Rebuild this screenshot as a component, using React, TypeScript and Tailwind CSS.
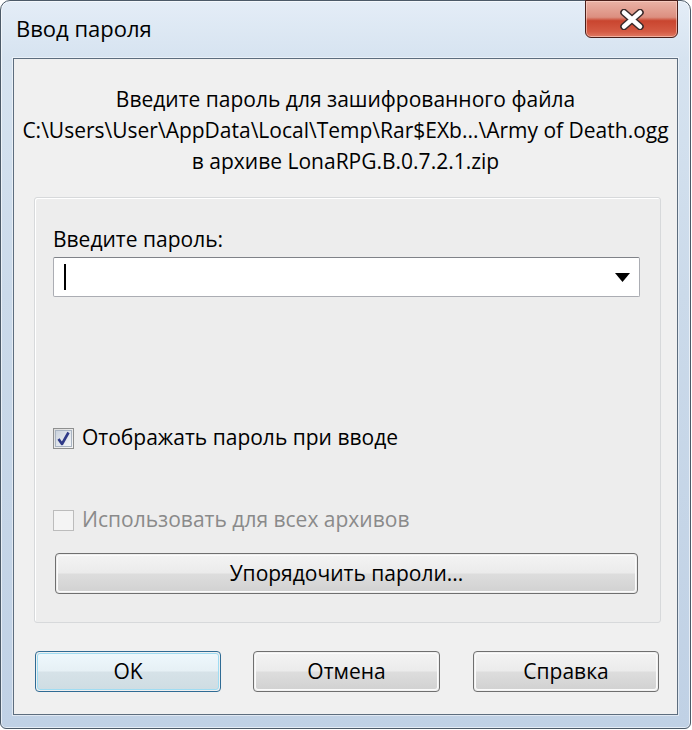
import React from "react";

const CloseGlyph: React.FC = () => (
  <svg width="26" height="21" viewBox="0 0 26 21">
    <path d="M5 3.5 L21 17.5 M21 3.5 L5 17.5" stroke="#3a2a2a" strokeWidth="7.5" strokeLinecap="round" />
    <path d="M5 3.5 L21 17.5 M21 3.5 L5 17.5" stroke="#ffffff" strokeWidth="4.5" strokeLinecap="round" />
  </svg>
);

const CheckMark: React.FC = () => (
  <svg width="15" height="15" viewBox="0 0 15 15">
    <path d="M2.5 8 L6 13 L12.5 1.5" fill="none" stroke="#2f3a88" strokeWidth="2.6" strokeLinejoin="round" />
  </svg>
);

const Win7Button: React.FC<{ label: string; primary?: boolean; className?: string }> = ({ label, primary, className }) => (
  <button
    className={
      "h-[41px] rounded-[4px] border p-[1px] " +
      (primary ? "border-[#2f6b94] " : "border-[#6f6f6f] ") +
      (className ?? "")
    }
  >
    <div
      className={
        "flex h-full w-full items-center justify-center rounded-[3px] border text-[21px] text-black " +
        (primary
          ? "border-[#9fdcf2] bg-[linear-gradient(#eef8fc_0%,#e6f0f5_48%,#d6e2e8_52%,#cfdde3_100%)]"
          : "border-[#fbfbfb] bg-[linear-gradient(#f3f3f3_0%,#ebebeb_48%,#dddddd_52%,#d2d2d2_100%)]")
      }
    >
      {label}
    </div>
  </button>
);

export default function App() {
  return (
    <div className="h-[730px] w-[692px] bg-white font-['Open_Sans',sans-serif] text-black">
      <div className="relative flex h-[729px] w-[691px] flex-col rounded-t-[10px] rounded-b-[6px] border border-[#4c5a68] bg-[linear-gradient(#e4edf7_0%,#d6e3f0_8%,#cbdaea_40%,#c0d1e5_100%)] shadow-[inset_0_0_0_1px_rgba(255,255,255,0.6)]">
        {/* title bar */}
        <div className="flex h-[57px] items-center pl-[15px] pb-[2px] text-[22px] text-black">Ввод пароля</div>
        <div className="absolute top-[-1px] right-[12px] flex h-[38px] w-[93px] items-center justify-center rounded-b-[6px] border border-[#4a1f1a] bg-[linear-gradient(#eab3a6_0%,#dc8f80_45%,#c9452f_55%,#d45a43_85%,#e07a63_100%)] shadow-[inset_0_0_0_1px_rgba(255,220,210,0.55)]">
          <CloseGlyph />
        </div>

        {/* client area */}
        <div className="mx-[12px] mb-[13px] flex flex-1 flex-col border border-[#5d6d7e] bg-[#f0f0f0] shadow-[0_0_0_1px_rgba(255,255,255,0.5)]">
          <div className="flex flex-col items-center pt-[25px] text-[21px] leading-[31px]">
            <div>Введите пароль для зашифрованного файла</div>
            <div className="whitespace-nowrap">C:\Users\User\AppData\Local\Temp\Rar$EXb...\Army of Death.ogg</div>
            <div>в архиве LonaRPG.B.0.7.2.1.zip</div>
          </div>

          {/* group box */}
          <div className="mt-[20px] ml-[20px] mr-[16px] flex flex-col rounded-[3px] border border-[#d7d9db] bg-[#ededed] pl-[18px] pr-[20px] pt-[26px] pb-[28px] shadow-[inset_1px_1px_0_#ffffff]">
            <div className="h-[31px] text-[21px] leading-[31px]">Введите пароль:</div>
            <div className="relative mt-[2px] flex h-[40px] items-center rounded-[2px] border border-[#abadb3] border-t-[#7f8288] bg-white">
              <div className="ml-[10px] h-[26px] w-[2px] bg-black" />
              <svg className="absolute right-[9px] top-[15px]" width="15" height="9" viewBox="0 0 15 9">
                <path d="M0 0 H15 L7.5 9 Z" fill="#000" />
              </svg>
            </div>

            <label className="mt-[125px] flex h-[32px] items-center gap-[8px] text-[21px]">
              <span className="flex h-[21px] w-[21px] items-center justify-center border border-[#8e8f8f] bg-[linear-gradient(135deg,#dcdcdc,#f6f6f6)] p-[1px]">
                <span className="flex h-full w-full items-center justify-center border border-[#a9b4c2] bg-[linear-gradient(135deg,#cbd3de,#f3f5f8)]">
                  <CheckMark />
                </span>
              </span>
              Отображать пароль при вводе
            </label>

            <label className="mt-[50px] flex h-[32px] items-center gap-[8px] text-[21px] text-[#8a8a8a]">
              <span className="h-[21px] w-[21px] border border-[#bcbcbc] bg-[#f4f4f4]" />
              Использовать для всех архивов
            </label>

            <Win7Button label="Упорядочить пароли..." className="mt-[17px] mx-[2px]" />
          </div>

          {/* bottom buttons */}
          <div className="mt-[28px] flex pl-[21px] pr-[18px]">
            <Win7Button label="OK" primary className="w-[186px]" />
            <Win7Button label="Отмена" className="ml-[32px] w-[187px]" />
            <Win7Button label="Справка" className="ml-[33px] w-[186px]" />
          </div>
        </div>
      </div>
    </div>
  );
}
